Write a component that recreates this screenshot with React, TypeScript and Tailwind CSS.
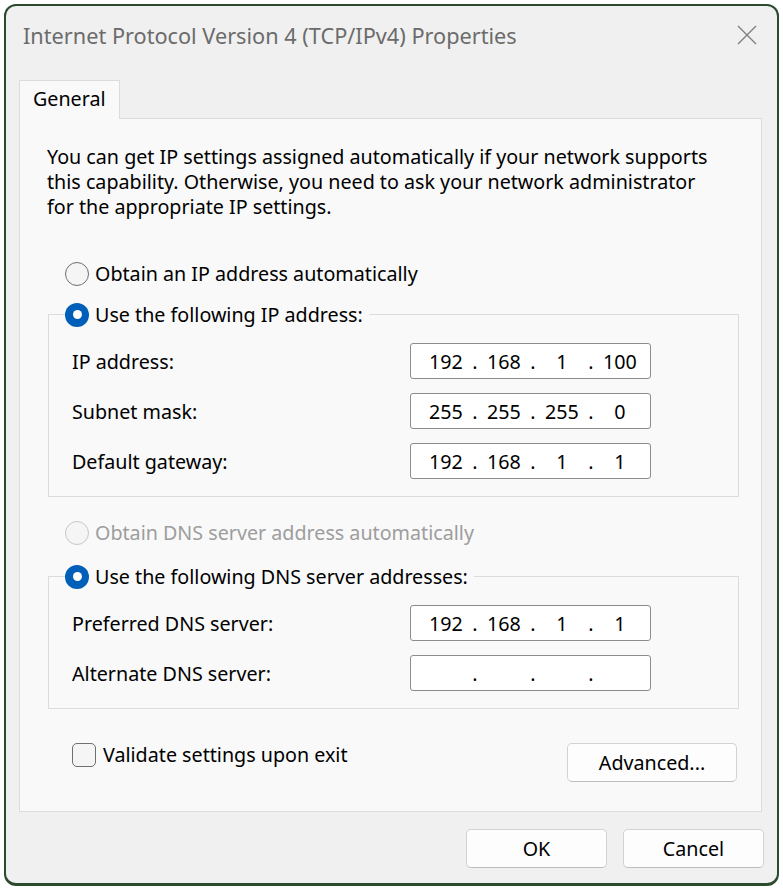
import React from "react";

type Radio = { checked?: boolean; disabled?: boolean };

function RadioDot({ checked, disabled }: Radio) {
    if (checked) {
        return (
            <span className="flex h-[24px] w-[24px] shrink-0 items-center justify-center rounded-full bg-[#005fb8]">
                <span className="h-[9px] w-[9px] rounded-full bg-white" />
            </span>
        );
    }
    return (
        <span
            className={`h-[24px] w-[24px] shrink-0 rounded-full border-[1.5px] bg-[#f5f5f5] ${
                disabled ? "border-[#c6c6c6]" : "border-[#6f6f6f]"
            }`}
        />
    );
}

function RadioRow({ label, checked, disabled }: Radio & { label: string }) {
    return (
        <div className="flex h-[25px] items-center gap-[6px]">
            <RadioDot checked={checked} disabled={disabled} />
            <span className={disabled ? "text-[#9d9d9d]" : "text-black"}>{label}</span>
        </div>
    );
}

function IpField({ parts }: { parts: string[] }) {
    return (
        <div className="flex h-[36px] w-[241px] items-center rounded-[3px] border-[1.5px] border-[#8c8c8c] bg-white pl-[13px]">
            {parts.map((p, i) => (
                <React.Fragment key={i}>
                    <span className="w-[44px] text-center">{p}</span>
                    {i < 3 && <span className="w-[14px] text-center">.</span>}
                </React.Fragment>
            ))}
        </div>
    );
}

function FieldRow({ label, parts }: { label: string; parts: string[] }) {
    return (
        <div className="flex items-center justify-between">
            <span>{label}</span>
            <IpField parts={parts} />
        </div>
    );
}

function Group({ legend, rows }: { legend: string; rows: { label: string; parts: string[] }[] }) {
    return (
        <fieldset className="mr-[-3px] border border-[#dcdcdc] pb-[17px] pl-[23px] pr-[87px]">
            <legend className="-ml-[7px] pr-[6px]">
                <RadioRow label={legend} checked />
            </legend>
            <div className="flex flex-col gap-[14px] pt-[16px]">
                {rows.map((r) => (
                    <FieldRow key={r.label} label={r.label} parts={r.parts} />
                ))}
            </div>
        </fieldset>
    );
}

function DialogButton({ label, width }: { label: string; width: string }) {
    return (
        <button
            type="button"
            className={`${width} h-[39px] rounded-[5px] border border-[#d3d3d3] border-b-[#bdbdbd] bg-[#fdfdfd] text-black`}
        >
            {label}
        </button>
    );
}

export default function App() {
    return (
        <div
            className="h-[889px] w-[783px] bg-white p-[4px] text-[19.7px] leading-[25px] text-black"
            style={{ fontFamily: '"Noto Sans", "Liberation Sans", sans-serif' }}
        >
            <div className="flex h-[882px] flex-col rounded-[12px] border-2 border-b-[3px] border-[#2b4a2e] bg-[#f0f0f0]">
                {/* title bar */}
                <div className="flex h-[60px] shrink-0 items-center justify-between pb-[2px] pl-[17px] pr-[20px]">
                    <span className="text-[21.7px] text-[#6b6b6b]">Internet Protocol Version 4 (TCP/IPv4) Properties</span>
                    <svg width="20" height="20" viewBox="0 0 20 20" fill="none" stroke="#808080" strokeWidth="1.4">
                        <path d="M1 1 L19 19 M19 1 L1 19" />
                    </svg>
                </div>

                {/* tabs */}
                <div className="mt-[14px] pl-[13px] pr-[15px]">
                    <div className="relative z-10 -mb-px flex h-[39px] w-[101px] items-center border border-b-0 border-[#dcdcdc] bg-[#f9f9f9] pb-[3px] pl-[13px]">
                        General
                    </div>
                    <div className="h-[694px] border border-[#dcdcdc] bg-[#f9f9f9] pl-[28px] pr-[25px] pt-[25px]">
                        <p className="-ml-px">
                            You can get IP settings assigned automatically if your network supports
                            <br />
                            this capability. Otherwise, you need to ask your network administrator
                            <br />
                            for the appropriate IP settings.
                        </p>

                        <div className="ml-[17px] mt-[42px]">
                            <RadioRow label="Obtain an IP address automatically" />
                        </div>

                        <div className="mt-[16px]">
                            <Group
                                legend="Use the following IP address:"
                                rows={[
                                    { label: "IP address:", parts: ["192", "168", "1", "100"] },
                                    { label: "Subnet mask:", parts: ["255", "255", "255", "0"] },
                                    { label: "Default gateway:", parts: ["192", "168", "1", "1"] },
                                ]}
                            />
                        </div>

                        <div className="ml-[17px] mt-[23px]">
                            <RadioRow label="Obtain DNS server address automatically" disabled />
                        </div>

                        <div className="mt-[19px]">
                            <Group
                                legend="Use the following DNS server addresses:"
                                rows={[
                                    { label: "Preferred DNS server:", parts: ["192", "168", "1", "1"] },
                                    { label: "Alternate DNS server:", parts: ["", "", "", ""] },
                                ]}
                            />
                        </div>

                        <div className="mt-[33px] flex items-start justify-between pl-[24px]">
                            <label className="flex items-center gap-[7px]">
                                <span className="h-[24px] w-[24px] rounded-[5px] border-[1.5px] border-[#6f6f6f] bg-[#f5f5f5]" />
                                <span>Validate settings upon exit</span>
                            </label>
                            <div className="mr-[-1px] mt-px">
                                <DialogButton label="Advanced..." width="w-[170px]" />
                            </div>
                        </div>
                    </div>
                </div>

                {/* footer buttons */}
                <div className="mt-[17px] flex justify-end gap-[16px] pr-[13px]">
                    <DialogButton label="OK" width="w-[141px]" />
                    <DialogButton label="Cancel" width="w-[141px]" />
                </div>
            </div>
        </div>
    );
}
